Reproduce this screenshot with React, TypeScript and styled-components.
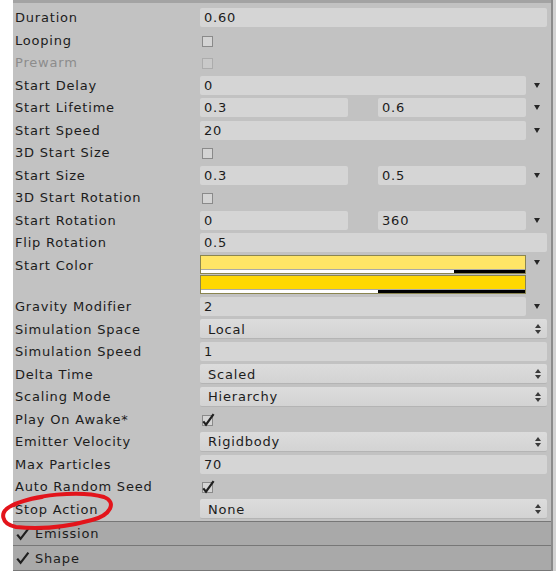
import React from 'react';
import styled, { createGlobalStyle } from 'styled-components';

const GlobalStyle = createGlobalStyle`
  html, body {
    margin: 0;
    padding: 0;
    background: #fff;
  }
`;

const Frame = styled.div`
  position: relative;
  width: 556px;
  height: 574px;
  display: flex;
  font-family: 'DejaVu Sans', 'Liberation Sans', sans-serif;
  font-size: 13px;
  letter-spacing: 0.8px;
  color: #1c1c1c;
`;

const Gutter = styled.div`
  width: 13px;
  background: #fff;
`;

const Panel = styled.div`
  width: 538px;
  height: 571px;
  box-sizing: border-box;
  border-top: 3px solid #a3a3a3;
  background: #c2c2c2;
  display: flex;
  flex-direction: column;
`;

const Edge = styled.div`
  width: 2px;
  height: 571px;
  background: #8a8a8a;
`;

const Tail = styled.div`
  width: 3px;
  height: 571px;
  background: #d2d2d2;
`;

const Body = styled.div`
  padding: 2.75px 4px 1px 2px;
`;

const Row = styled.div<{ $tall?: boolean }>`
  display: grid;
  grid-template-columns: 185px 1fr;
  align-items: ${(p) => (p.$tall ? 'start' : 'center')};
  height: ${(p) => (p.$tall ? 41.5 : 22.5)}px;
`;

const Label = styled.div<{ $disabled?: boolean }>`
  line-height: 22.5px;
  padding-top: 1.5px;
  white-space: nowrap;
  color: ${(p) => (p.$disabled ? '#8c8c8c' : '#1c1c1c')};
`;

const Field = styled.div<{ $pad?: number }>`
  height: 19px;
  line-height: 20px;
  padding-left: ${(p) => p.$pad ?? 4}px;
  background: #d5d5d5;
  border-radius: 2px;
  white-space: nowrap;
  overflow: hidden;
`;

const WithArrow = styled.div`
  display: grid;
  grid-template-columns: 1fr 21px;
  align-items: center;
`;

const Pair = styled.div`
  display: grid;
  grid-template-columns: 1fr 30px 1fr 21px;
  align-items: center;
`;

const ArrowCell = styled.div`
  display: flex;
  justify-content: center;
  align-items: center;
  height: 19px;
`;

const Down = styled.span`
  width: 0;
  height: 0;
  border-left: 3.5px solid transparent;
  border-right: 3.5px solid transparent;
  border-top: 5px solid #262626;
  margin-left: 1px;
`;

const Up = styled.span`
  width: 0;
  height: 0;
  border-left: 3.5px solid transparent;
  border-right: 3.5px solid transparent;
  border-bottom: 4px solid #3a3a3a;
`;

const UpDown = styled.span`
  display: flex;
  flex-direction: column;
  align-items: center;
  gap: 2px;
  margin-right: 6px;
  ${Down} {
    margin-left: 0;
    border-top-width: 4px;
    border-top-color: #3a3a3a;
  }
`;

const Popup = styled.div`
  height: 20px;
  box-sizing: border-box;
  display: flex;
  align-items: center;
  justify-content: space-between;
  padding: 1px 0 0 8px;
  background: linear-gradient(to bottom, #dcdcdc 0%, #d3d3d3 100%);
  border-bottom: 1px solid #b4b4b4;
  border-radius: 2px;
`;

const Bars = styled.div`
  display: flex;
  flex-direction: column;
  gap: 1px;
  margin-top: 1.75px;
`;

const ColorBar = styled.div`
  border: 1px solid #8a8550;
  display: flex;
  flex-direction: column;
`;

const Swatch = styled.div<{ $color: string }>`
  height: 13px;
  background: ${(p) => p.$color};
`;

const AlphaStrip = styled.div`
  height: 3px;
  border-top: 1px solid #a9a9a9;
`;

const ColorRow = styled.div`
  display: grid;
  grid-template-columns: 1fr 21px;
  align-items: start;
`;

const Header = styled.div`
  height: 24px;
  border-top: 1px solid #777;
  background: #a9a9a9;
  display: flex;
  align-items: center;
  gap: 5px;
  padding-left: 3px;
  &:last-child {
    border-bottom: 1px solid #777;
  }
`;

const Overlay = styled.svg`
  position: absolute;
  left: 0;
  top: 0;
  pointer-events: none;
`;

const Check = ({ checked, disabled }: { checked?: boolean; disabled?: boolean }) => (
  <svg width="16" height="16" viewBox="0 0 16 16" style={{ display: 'block', marginLeft: 1, marginTop: 1 }}>
    <rect
      x="1.5"
      y="3.5"
      width="10"
      height="10"
      fill={disabled ? '#c9c9c9' : '#d4d4d4'}
      stroke={disabled ? '#acacac' : '#8a8a8a'}
    />
    {checked && (
      <path d="M2.3 9.4 L5 12.6 L12.6 2.2" fill="none" stroke="#1f1f1f" strokeWidth="2.2" />
    )}
  </svg>
);

const Tick = () => (
  <svg width="14" height="14" viewBox="0 0 14 14" style={{ display: 'block' }}>
    <path d="M1.2 7.6 L4.6 11.8 L12.4 1.6" fill="none" stroke="#1f1f1f" strokeWidth="2.2" />
  </svg>
);

type fieldKind =
  | { kind: 'text'; value: string }
  | { kind: 'arrow'; value: string }
  | { kind: 'pair'; a: string; b: string }
  | { kind: 'check'; checked?: boolean; disabled?: boolean }
  | { kind: 'popup'; value: string };

type rowType = { label: string; disabled?: boolean; field: fieldKind };

const topRows: rowType[] = [
  { label: 'Duration', field: { kind: 'text', value: '0.60' } },
  { label: 'Looping', field: { kind: 'check' } },
  { label: 'Prewarm', disabled: true, field: { kind: 'check', disabled: true } },
  { label: 'Start Delay', field: { kind: 'arrow', value: '0' } },
  { label: 'Start Lifetime', field: { kind: 'pair', a: '0.3', b: '0.6' } },
  { label: 'Start Speed', field: { kind: 'arrow', value: '20' } },
  { label: '3D Start Size', field: { kind: 'check' } },
  { label: 'Start Size', field: { kind: 'pair', a: '0.3', b: '0.5' } },
  { label: '3D Start Rotation', field: { kind: 'check' } },
  { label: 'Start Rotation', field: { kind: 'pair', a: '0', b: '360' } },
  { label: 'Flip Rotation', field: { kind: 'text', value: '0.5' } },
];

const bottomRows: rowType[] = [
  { label: 'Gravity Modifier', field: { kind: 'arrow', value: '2' } },
  { label: 'Simulation Space', field: { kind: 'popup', value: 'Local' } },
  { label: 'Simulation Speed', field: { kind: 'text', value: '1' } },
  { label: 'Delta Time', field: { kind: 'popup', value: 'Scaled' } },
  { label: 'Scaling Mode', field: { kind: 'popup', value: 'Hierarchy' } },
  { label: 'Play On Awake*', field: { kind: 'check', checked: true } },
  { label: 'Emitter Velocity', field: { kind: 'popup', value: 'Rigidbody' } },
  { label: 'Max Particles', field: { kind: 'text', value: '70' } },
  { label: 'Auto Random Seed', field: { kind: 'check', checked: true } },
  { label: 'Stop Action', field: { kind: 'popup', value: 'None' } },
];

const renderField = (f: fieldKind) => {
  switch (f.kind) {
    case 'text':
      return <Field>{f.value}</Field>;
    case 'arrow':
      return (
        <WithArrow>
          <Field>{f.value}</Field>
          <ArrowCell>
            <Down />
          </ArrowCell>
        </WithArrow>
      );
    case 'pair':
      return (
        <Pair>
          <Field>{f.a}</Field>
          <span />
          <Field>{f.b}</Field>
          <ArrowCell>
            <Down />
          </ArrowCell>
        </Pair>
      );
    case 'check':
      return <Check checked={f.checked} disabled={f.disabled} />;
    case 'popup':
      return (
        <Popup>
          {f.value}
          <UpDown>
            <Up />
            <Down />
          </UpDown>
        </Popup>
      );
  }
};

const PropRow = ({ row }: { row: rowType }) => (
  <Row>
    <Label $disabled={row.disabled}>{row.label}</Label>
    {renderField(row.field)}
  </Row>
);

const alpha = (pct: number) => ({
  background: `linear-gradient(to right, #fff ${pct}%, #000 ${pct}%)`,
});

export default function App() {
  return (
    <Frame>
      <GlobalStyle />
      <Gutter />
      <Panel>
        <Body>
          {topRows.map((r) => (
            <PropRow key={r.label} row={r} />
          ))}
          <Row $tall>
            <Label>Start Color</Label>
            <ColorRow>
              <Bars>
                <ColorBar>
                  <Swatch $color="#ffe566" />
                  <AlphaStrip style={alpha(78.2)} />
                </ColorBar>
                <ColorBar>
                  <Swatch $color="#ffd800" />
                  <AlphaStrip style={alpha(54.6)} />
                </ColorBar>
              </Bars>
              <ArrowCell>
                <Down />
              </ArrowCell>
            </ColorRow>
          </Row>
          {bottomRows.map((r) => (
            <PropRow key={r.label} row={r} />
          ))}
        </Body>
        <Header>
          <Tick />
          Emission
        </Header>
        <Header>
          <Tick />
          Shape
        </Header>
      </Panel>
      <Edge />
      <Tail />
      <Overlay width="556" height="574">
        <path
          d="M14 505 C32 495 80 490 104 497 C117 502 111 515 92 520 C70 526 42 530 16 527 C1 524 -1 512 11 506 C20 501 30 499 42 497"
          fill="none"
          stroke="#e3141b"
          strokeWidth="4"
          strokeLinecap="round"
        />
      </Overlay>
    </Frame>
  );
}
